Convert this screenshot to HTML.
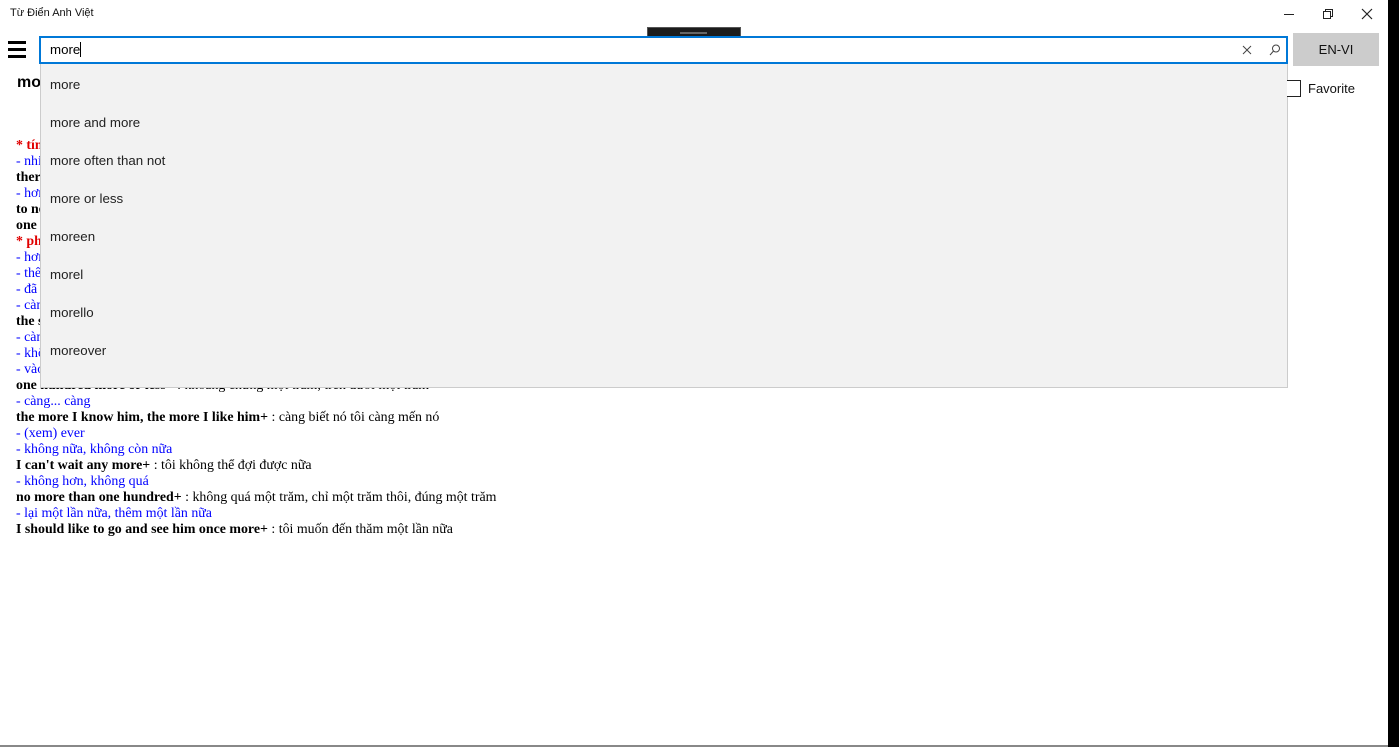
<!DOCTYPE html>
<html><head><meta charset="utf-8"><style>
*{margin:0;padding:0;box-sizing:border-box}
body{width:1399px;height:747px;overflow:hidden;background:#fff;position:relative;font-family:"Liberation Sans","DejaVu Sans",sans-serif}
.abs{position:absolute}
#content{left:16px;top:137px;font-family:"Liberation Serif",serif;font-size:13.9px;line-height:16px;color:#000;white-space:nowrap}
#content div{height:16px}
.r{color:#e00000;font-weight:bold}.b{color:#0000ff}.k{font-weight:bold}
.dd{left:40px;top:64px;width:1248px;height:324px;background:#f2f2f2;border:1px solid #ccc;border-top:none}
.dd div{position:absolute;left:9px;font-size:13.3px;color:#222}
</style></head><body>
<div class="abs" style="left:10px;top:7px;font-size:11px;color:#111">Từ Điển Anh Việt</div>
<div class="abs" style="left:1284px;top:14px;width:10px;height:1px;background:#222"></div>
<svg class="abs" style="left:1322px;top:8px" width="12" height="12"><rect x="1.5" y="3.5" width="7" height="7" fill="none" stroke="#222"/><path d="M3.5 3.5V1.5h7v7h-2" fill="none" stroke="#222"/></svg>
<svg class="abs" style="left:1361px;top:8px" width="12" height="12"><path d="M1 1L11 11M11 1L1 11" stroke="#222" stroke-width="1.2"/></svg>
<div class="abs" style="left:1388px;top:0;width:11px;height:747px;background:#000"></div>
<div class="abs" style="left:0;top:745px;width:1388px;height:2px;background:#888"></div>
<div class="abs" style="left:647px;top:27px;width:94px;height:10px;background:#1c1c1c;border:1px solid #555"></div>
<div class="abs" style="left:680px;top:32px;width:27px;height:2px;background:#666"></div>
<div class="abs" style="left:8px;top:41px;width:18px;height:3px;background:#000"></div>
<div class="abs" style="left:8px;top:48px;width:18px;height:3px;background:#000"></div>
<div class="abs" style="left:8px;top:55px;width:18px;height:3px;background:#000"></div>
<div class="abs" style="left:17px;top:74px;font-size:16px;font-weight:bold">more</div>
<div id="content" class="abs" style="top:138px">
<div class="r">* tính từ</div>
<div class="b">- nhiều hơn, đông hơn</div>
<div><span class="k">there are more people than usual+</span> : có nhiều người hơn thường lệ</div>
<div class="b">- hơn nữa, thêm nữa</div>
<div><span class="k">to need more time+</span> : cần thêm thì giờ</div>
<div><span class="k">one more word+</span> : một lời nói thêm</div>
<div class="r">* phó từ</div>
<div class="b">- hơn, nhiều hơn</div>
<div class="b">- thêm nữa</div>
<div class="b">- đã thêm</div>
<div class="b">- càng</div>
<div><span class="k">the sooner the better+</span> : càng sớm càng tốt</div>
<div class="b">- càng hơn</div>
<div class="b">- không hơn</div>
<div class="b">- vào khoảng</div>
<div><span class="k">one hundred more or less+</span> : khoảng chừng một trăm, trên dưới một trăm</div>
<div class="b">- càng... càng</div>
<div><span class="k">the more I know him, the more I like him+</span> : càng biết nó tôi càng mến nó</div>
<div class="b">- (xem) ever</div>
<div class="b">- không nữa, không còn nữa</div>
<div><span class="k">I can't wait any more+</span> : tôi không thể đợi được nữa</div>
<div class="b">- không hơn, không quá</div>
<div><span class="k">no more than one hundred+</span> : không quá một trăm, chỉ một trăm thôi, đúng một trăm</div>
<div class="b">- lại một lần nữa, thêm một lần nữa</div>
<div><span class="k">I should like to go and see him once more+</span> : tôi muốn đến thăm một lần nữa</div>
</div>
<div class="abs dd">
<div style="top:13px">more</div><div style="top:51px">more and more</div><div style="top:89px">more often than not</div><div style="top:127px">more or less</div><div style="top:165px">moreen</div><div style="top:203px">morel</div><div style="top:241px">morello</div><div style="top:279px">moreover</div>
</div>
<div class="abs" style="left:39px;top:36px;width:1249px;height:28px;border:2px solid #0078d7;background:#fff"></div>
<div class="abs" style="left:50px;top:42px;font-size:13.3px;color:#000">more<span style="display:inline-block;width:1px;height:15px;background:#000;vertical-align:-3px"></span></div>
<svg class="abs" style="left:1242px;top:45px" width="10" height="10"><path d="M1 1L9 9M9 1L1 9" stroke="#444" stroke-width="1"/></svg>
<svg class="abs" style="left:1269px;top:44px" width="12" height="12"><circle cx="7" cy="4.5" r="3.5" fill="none" stroke="#444"/><path d="M4.5 7L1 11" stroke="#444"/></svg>
<div class="abs" style="left:1293px;top:33px;width:86px;height:33px;background:#ccc;font-size:13px;line-height:33px;text-align:center;color:#111">EN-VI</div>
<div class="abs" style="left:1287px;top:80px;width:14px;height:17px;border:1px solid #222;border-left:none;background:#fff"></div>
<div class="abs" style="left:1308px;top:81px;font-size:13px;color:#111">Favorite</div>
</body></html>
